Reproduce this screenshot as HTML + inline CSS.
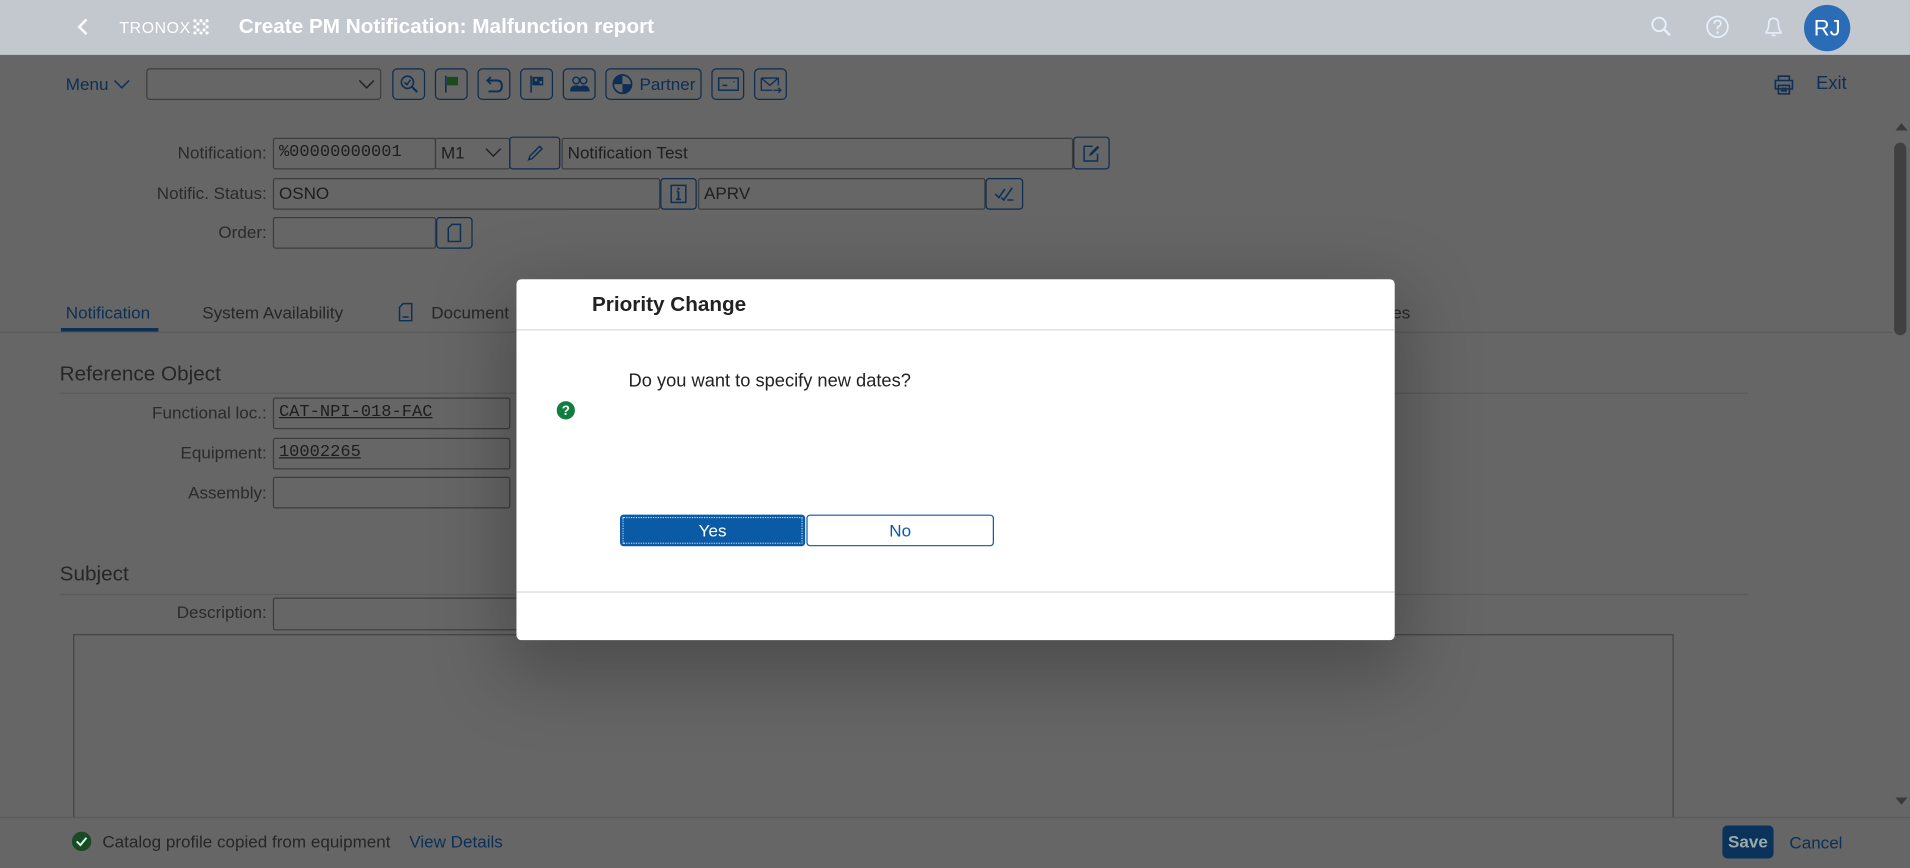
<!DOCTYPE html>
<html><head><meta charset="utf-8">
<style>
html,body{margin:0;padding:0;width:1910px;height:867px;overflow:hidden;background:#666;}
#w{position:absolute;left:0;top:0;width:1568px;height:711px;transform:scale(1.2181,1.2194);transform-origin:0 0;font-family:"Liberation Sans",sans-serif;color:#262626;background:#666;}
.a{position:absolute;}
.t{position:absolute;font-size:14px;white-space:nowrap;line-height:16px;}
.lbl{position:absolute;font-size:14px;text-align:right;width:200px;line-height:16px;color:#2a2a2a;}
.in{position:absolute;border:1px solid #3d3d3d;border-radius:2px;box-sizing:border-box;font-size:14px;line-height:23px;padding-left:4px;color:#1e1e1e;}
.mono{font-family:"Liberation Mono",monospace;font-size:14px;}
.btn{position:absolute;border:1px solid #0e2c4e;border-radius:4px;box-sizing:border-box;top:56px;height:26px;}
.btn svg{position:absolute;left:50%;top:50%;transform:translate(-50%,-50%);}
.ib{position:absolute;border:1px solid #0e2c4e;border-radius:3px;box-sizing:border-box;}
.ib svg{position:absolute;left:50%;top:50%;transform:translate(-50%,-50%);}
</style></head><body><div id="w">
<!-- header -->
<div class="a" style="left:0;top:0;width:1568px;height:45px;background:#c3c8cf;"></div>
<svg class="a" style="left:61px;top:14px" width="14" height="16"><path d="M10 2 L4 8 L10 14" stroke="#fff" stroke-width="2" fill="none"/></svg>
<div class="t" style="left:98px;top:15px;color:#fff;font-size:13px;letter-spacing:0.5px;">TRONOX</div>
<svg class="a" style="left:157px;top:14px" width="16" height="16"><g fill="#fff"><circle cx="3" cy="3" r="1.3"/><circle cx="8" cy="3" r="1.3"/><circle cx="13" cy="3" r="1.3"/><circle cx="5.5" cy="5.5" r="1.3"/><circle cx="10.5" cy="5.5" r="1.3"/><circle cx="3" cy="8" r="1.3"/><circle cx="13" cy="8" r="1.3"/><circle cx="5.5" cy="10.5" r="1.3"/><circle cx="10.5" cy="10.5" r="1.3"/><circle cx="3" cy="13" r="1.3"/><circle cx="8" cy="13" r="1.3"/><circle cx="13" cy="13" r="1.3"/></g></svg>
<div class="t" style="left:196px;top:12px;color:#fff;font-size:17px;font-weight:bold;line-height:20px;">Create PM Notification: Malfunction report</div>
<svg class="a" style="left:1355px;top:13px" width="18" height="18"><circle cx="7" cy="7" r="5.5" stroke="#e6f0fb" stroke-width="1.6" fill="none"/><path d="M11 11 L16 16" stroke="#e6f0fb" stroke-width="2"/></svg>
<svg class="a" style="left:1400px;top:12px" width="20" height="20"><circle cx="10" cy="10" r="8.5" stroke="#e6f0fb" stroke-width="1.4" fill="none"/><path d="M7.3 7.5 Q7.5 4.8 10 4.8 Q12.7 4.8 12.7 7.3 Q12.7 9 10 10.3 L10 12" stroke="#e6f0fb" stroke-width="1.4" fill="none"/><circle cx="10" cy="14.7" r="1" fill="#e6f0fb"/></svg>
<svg class="a" style="left:1447px;top:12px" width="18" height="20"><path d="M3 15 L3 14 Q5 12 5 8 Q5 3 9 3 Q13 3 13 8 Q13 12 15 14 L15 15 Z" stroke="#e6f0fb" stroke-width="1.3" fill="none"/><path d="M7.5 17 L10.5 17" stroke="#e6f0fb" stroke-width="1.5"/></svg>
<div class="a" style="left:1481px;top:4px;width:38px;height:38px;border-radius:50%;background:#2a6cb5;color:#fff;font-size:18px;line-height:38px;text-align:center;">RJ</div>

<!-- toolbar -->
<div class="t" style="left:54px;top:61px;color:#0c2f55;font-size:14px;">Menu</div>
<svg class="a" style="left:93px;top:65px" width="14" height="9"><path d="M1 1 L7 7 L13 1" stroke="#0c2f55" stroke-width="1.2" fill="none"/></svg>
<div class="a" style="left:120px;top:56px;width:193px;height:26px;border:1px solid #3d3d3d;border-radius:3px;box-sizing:border-box;"></div>
<svg class="a" style="left:294px;top:65px" width="14" height="9"><path d="M1 1 L7 7 L13 1" stroke="#222" stroke-width="1.2" fill="none"/></svg>
<div class="btn" style="left:322px;width:27px;"><svg width="16" height="16"><circle cx="6.5" cy="6.5" r="5" stroke="#0c2f55" stroke-width="1.3" fill="none"/><path d="M4 6.5 L6 8.5 L9 4.5" stroke="#0c2f55" stroke-width="1.2" fill="none"/><path d="M10 10 L14.5 14.5" stroke="#0c2f55" stroke-width="1.8"/></svg></div>
<div class="btn" style="left:357px;width:27px;"><svg width="14" height="16"><path d="M2 1 L2 15" stroke="#0c2f55" stroke-width="1.3"/><path d="M3 2 L12 2 L12 9 L3 9 Z" fill="#1a4a1e"/></svg></div>
<div class="btn" style="left:392px;width:27px;"><svg width="16" height="16"><path d="M5 2 L2 5 L5 8" stroke="#0c2f55" stroke-width="1.4" fill="none"/><path d="M2 5 L10 5 Q14 5 14 9.5 Q14 14 10 14 L3 14" stroke="#0c2f55" stroke-width="1.6" fill="none"/></svg></div>
<div class="btn" style="left:427px;width:27px;"><svg width="14" height="16"><path d="M2 1 L2 15" stroke="#0c2f55" stroke-width="1.3"/><path d="M3 2 L12 2 L12 9 L3 9 Z" fill="#0c2f55"/><path d="M5 3.5 h2 v2 h-2z M9 5.5 h2 v2 h-2z" fill="#666"/></svg></div>
<div class="btn" style="left:462px;width:27px;"><svg width="18" height="14"><circle cx="6" cy="4" r="2.7" stroke="#0c2f55" stroke-width="1.2" fill="none"/><circle cx="12" cy="4" r="2.7" stroke="#0c2f55" stroke-width="1.2" fill="none"/><path d="M1 13 Q1 8 6 8 Q11 8 11 13Z M8 13 Q8 8 12 8 Q17 8 17 13Z" fill="#0c2f55"/></svg></div>
<div class="btn" style="left:497px;width:79px;"><svg style="left:13px;transform:translate(-50%,-50%)" width="18" height="18"><circle cx="9" cy="9" r="7.5" stroke="#0c2f55" stroke-width="1.4" fill="none"/><path d="M9 9 L9 1.5 A7.5 7.5 0 0 0 1.5 9 Z M9 9 L16.5 9 A7.5 7.5 0 0 1 9 16.5 Z" fill="#0c2f55"/></svg><div class="t" style="left:27px;top:4px;color:#0c2f55;">Partner</div></div>
<div class="btn" style="left:584px;width:27px;"><svg width="18" height="14"><rect x="1" y="2" width="16" height="10" stroke="#0c2f55" stroke-width="1.2" fill="none"/><path d="M4 8 H8 M13 5 H14" stroke="#0c2f55" stroke-width="1.2"/></svg></div>
<div class="btn" style="left:619px;width:27px;"><svg width="18" height="16"><path d="M1 3 H15 V9 M1 3 V13 H10 M1 3 L8 9 L15 3" stroke="#0c2f55" stroke-width="1.1" fill="none"/><path d="M11 13 H17 M15 11 L17 13 L15 15" stroke="#0c2f55" stroke-width="1.1" fill="none"/></svg></div>
<svg class="a" style="left:1456px;top:61px" width="17" height="17"><path d="M4 5 V1.5 H13 V5 M1.5 5 H15.5 V12 H1.5 Z M4 9 H13 V16 H4 Z M6 11.5 H11 M6 13.5 H11" stroke="#0c2f55" stroke-width="1.3" fill="none"/></svg>
<div class="t" style="left:1491px;top:61px;color:#0c2f55;font-size:15px;">Exit</div>

<!-- scrollbar -->
<svg class="a" style="left:1555px;top:99px" width="12" height="9"><path d="M1 8 L6 2 L11 8Z" fill="#3a3a3a"/></svg>
<div class="a" style="left:1555px;top:117px;width:10px;height:158px;background:#404040;border-radius:5px;"></div>
<svg class="a" style="left:1555px;top:653px" width="12" height="9"><path d="M1 1 L6 7 L11 1Z" fill="#3a3a3a"/></svg>

<!-- header form -->
<div class="lbl" style="left:19px;top:117px;">Notification:</div>
<div class="in mono" style="left:224px;top:113px;width:134px;height:26px;">%00000000001</div>
<div class="in" style="left:357px;top:113px;width:62px;height:26px;">M1</div>
<svg class="a" style="left:398px;top:121px" width="14" height="9"><path d="M1 1 L7 7 L13 1" stroke="#222" stroke-width="1.2" fill="none"/></svg>
<div class="ib" style="left:418px;top:112px;width:42px;height:27px;"><svg width="16" height="16"><path d="M3 13 L4 10 L12 2 L14 4 L6 12 Z" stroke="#0c2f55" stroke-width="1.2" fill="none"/></svg></div>
<div class="in" style="left:461px;top:113px;width:420px;height:26px;">Notification Test</div>
<div class="ib" style="left:881px;top:112px;width:30px;height:27px;"><svg width="16" height="16"><path d="M9 2 H2 V14 H13 V8" stroke="#0c2f55" stroke-width="1.2" fill="none"/><path d="M6 10 L7 7.5 L13 1.5 L14.5 3 L8.5 9 Z" fill="#0c2f55"/></svg></div>

<div class="lbl" style="left:19px;top:150px;">Notific. Status:</div>
<div class="in" style="left:224px;top:146px;width:318px;height:26px;">OSNO</div>
<div class="ib" style="left:542px;top:146px;width:30px;height:26px;"><svg width="14" height="16"><rect x="1" y="1" width="12" height="14" stroke="#0c2f55" stroke-width="1.2" fill="none"/><path d="M7 6 V12.5 M5 12.5 H9 M5.5 6 H7" stroke="#0c2f55" stroke-width="1.5"/><circle cx="7" cy="3.8" r="1" fill="#0c2f55"/></svg></div>
<div class="in" style="left:573px;top:146px;width:236px;height:26px;">APRV</div>
<div class="ib" style="left:809px;top:146px;width:31px;height:26px;"><svg width="18" height="14"><path d="M1 7 L4 10 L9 3 M6 10 L8 12 L15 2 M11 12 L16 12" stroke="#0c2f55" stroke-width="1.3" fill="none"/></svg></div>

<div class="lbl" style="left:19px;top:182px;">Order:</div>
<div class="in" style="left:224px;top:178px;width:134px;height:26px;"></div>
<div class="ib" style="left:358px;top:178px;width:30px;height:26px;"><svg width="12" height="16"><path d="M4 1 H11 V15 H1 V4 Z" stroke="#0c2f55" stroke-width="1.2" fill="none"/></svg></div>

<!-- tabs -->
<div class="t" style="left:54px;top:248px;color:#0c2f55;">Notification</div>
<div class="a" style="left:50px;top:269px;width:80px;height:3px;background:#0c2f55;"></div>
<div class="t" style="left:166px;top:248px;">System Availability</div>
<svg class="a" style="left:327px;top:248px" width="12" height="16"><path d="M4 1 H11 V15 H1 V4 Z" stroke="#0c2f55" stroke-width="1.2" fill="none"/><path d="M3.5 12 H8.5" stroke="#0c2f55" stroke-width="1.2"/></svg>
<div class="t" style="left:354px;top:248px;">Document</div>
<div class="t" style="left:1143px;top:248px;">es</div>
<div class="a" style="left:0;top:272px;width:1553px;height:1px;background:#5a5a5a;"></div>

<div class="t" style="left:49px;top:297px;font-size:17px;line-height:20px;">Reference Object</div>
<div class="a" style="left:49px;top:322px;width:1386px;height:1px;background:#5a5a5a;"></div>
<div class="lbl" style="left:19px;top:330px;">Functional loc.:</div>
<div class="in mono" style="left:224px;top:326px;width:195px;height:26px;text-decoration:underline;">CAT-NPI-018-FAC</div>
<div class="lbl" style="left:19px;top:363px;">Equipment:</div>
<div class="in mono" style="left:224px;top:359px;width:195px;height:26px;text-decoration:underline;">10002265</div>
<div class="lbl" style="left:19px;top:396px;">Assembly:</div>
<div class="in" style="left:224px;top:391px;width:195px;height:26px;"></div>

<div class="t" style="left:49px;top:461px;font-size:17px;line-height:20px;">Subject</div>
<div class="a" style="left:49px;top:487px;width:1386px;height:1px;background:#5a5a5a;"></div>
<div class="lbl" style="left:19px;top:494px;">Description:</div>
<div class="in" style="left:224px;top:490px;width:210px;height:27px;"></div>
<div class="a" style="left:60px;top:520px;width:1314px;height:160px;border:1px solid #444;box-sizing:border-box;"></div>

<!-- footer -->
<div class="a" style="left:0;top:670px;width:1568px;height:41px;background:#666;border-top:1px solid #5a5a5a;"></div>
<svg class="a" style="left:59px;top:682px" width="16" height="16"><circle cx="8" cy="8" r="8" fill="#1a4a24"/><path d="M4 8 L7 11 L12 5" stroke="#cfe" stroke-width="1.6" fill="none"/></svg>
<div class="t" style="left:84px;top:682px;">Catalog profile copied from equipment</div>
<div class="t" style="left:336px;top:682px;color:#0c2f55;">View Details</div>
<div class="a" style="left:1414px;top:677px;width:42px;height:27px;background:#0b325a;border-radius:4px;color:#9aa;font-weight:bold;font-size:14px;line-height:27px;text-align:center;">Save</div>
<div class="t" style="left:1469px;top:683px;color:#0c2f55;">Cancel</div>

<!-- dialog shadow + dialog -->
<div class="a" style="left:424px;top:229px;width:721px;height:296px;background:#fff;border-radius:4px;box-shadow:0 20px 60px 10px rgba(0,0,0,0.25);">
  <div class="t" style="left:62px;top:11px;font-size:17px;font-weight:bold;line-height:20px;color:#222;">Priority Change</div>
  <div class="a" style="left:0;top:41px;width:721px;height:1px;background:#d9d9d9;"></div>
  <div class="t" style="left:92px;top:75px;font-size:15px;line-height:18px;color:#222;">Do you want to specify new dates?</div>
  <svg class="a" style="left:33px;top:100px" width="15" height="15"><circle cx="7.5" cy="7.5" r="7.5" fill="#107e3e"/><text x="7.5" y="11.5" font-size="11" font-weight="bold" fill="#fff" text-anchor="middle" font-family="Liberation Sans">?</text></svg>
  <div class="a" style="left:85px;top:193px;width:152px;height:26px;background:#0a5aa6;border-radius:3px;color:#fff;font-size:14px;line-height:26px;text-align:center;outline:1px dotted #cfe0f5;outline-offset:-3px;">Yes</div>
  <div class="a" style="left:238px;top:193px;width:154px;height:26px;border:1px solid #0a5aa6;box-sizing:border-box;border-radius:3px;color:#0a5aa6;font-size:14px;line-height:24px;text-align:center;">No</div>
  <div class="a" style="left:0;top:256px;width:721px;height:1px;background:#d9d9d9;"></div>
</div>
</div></body></html>
